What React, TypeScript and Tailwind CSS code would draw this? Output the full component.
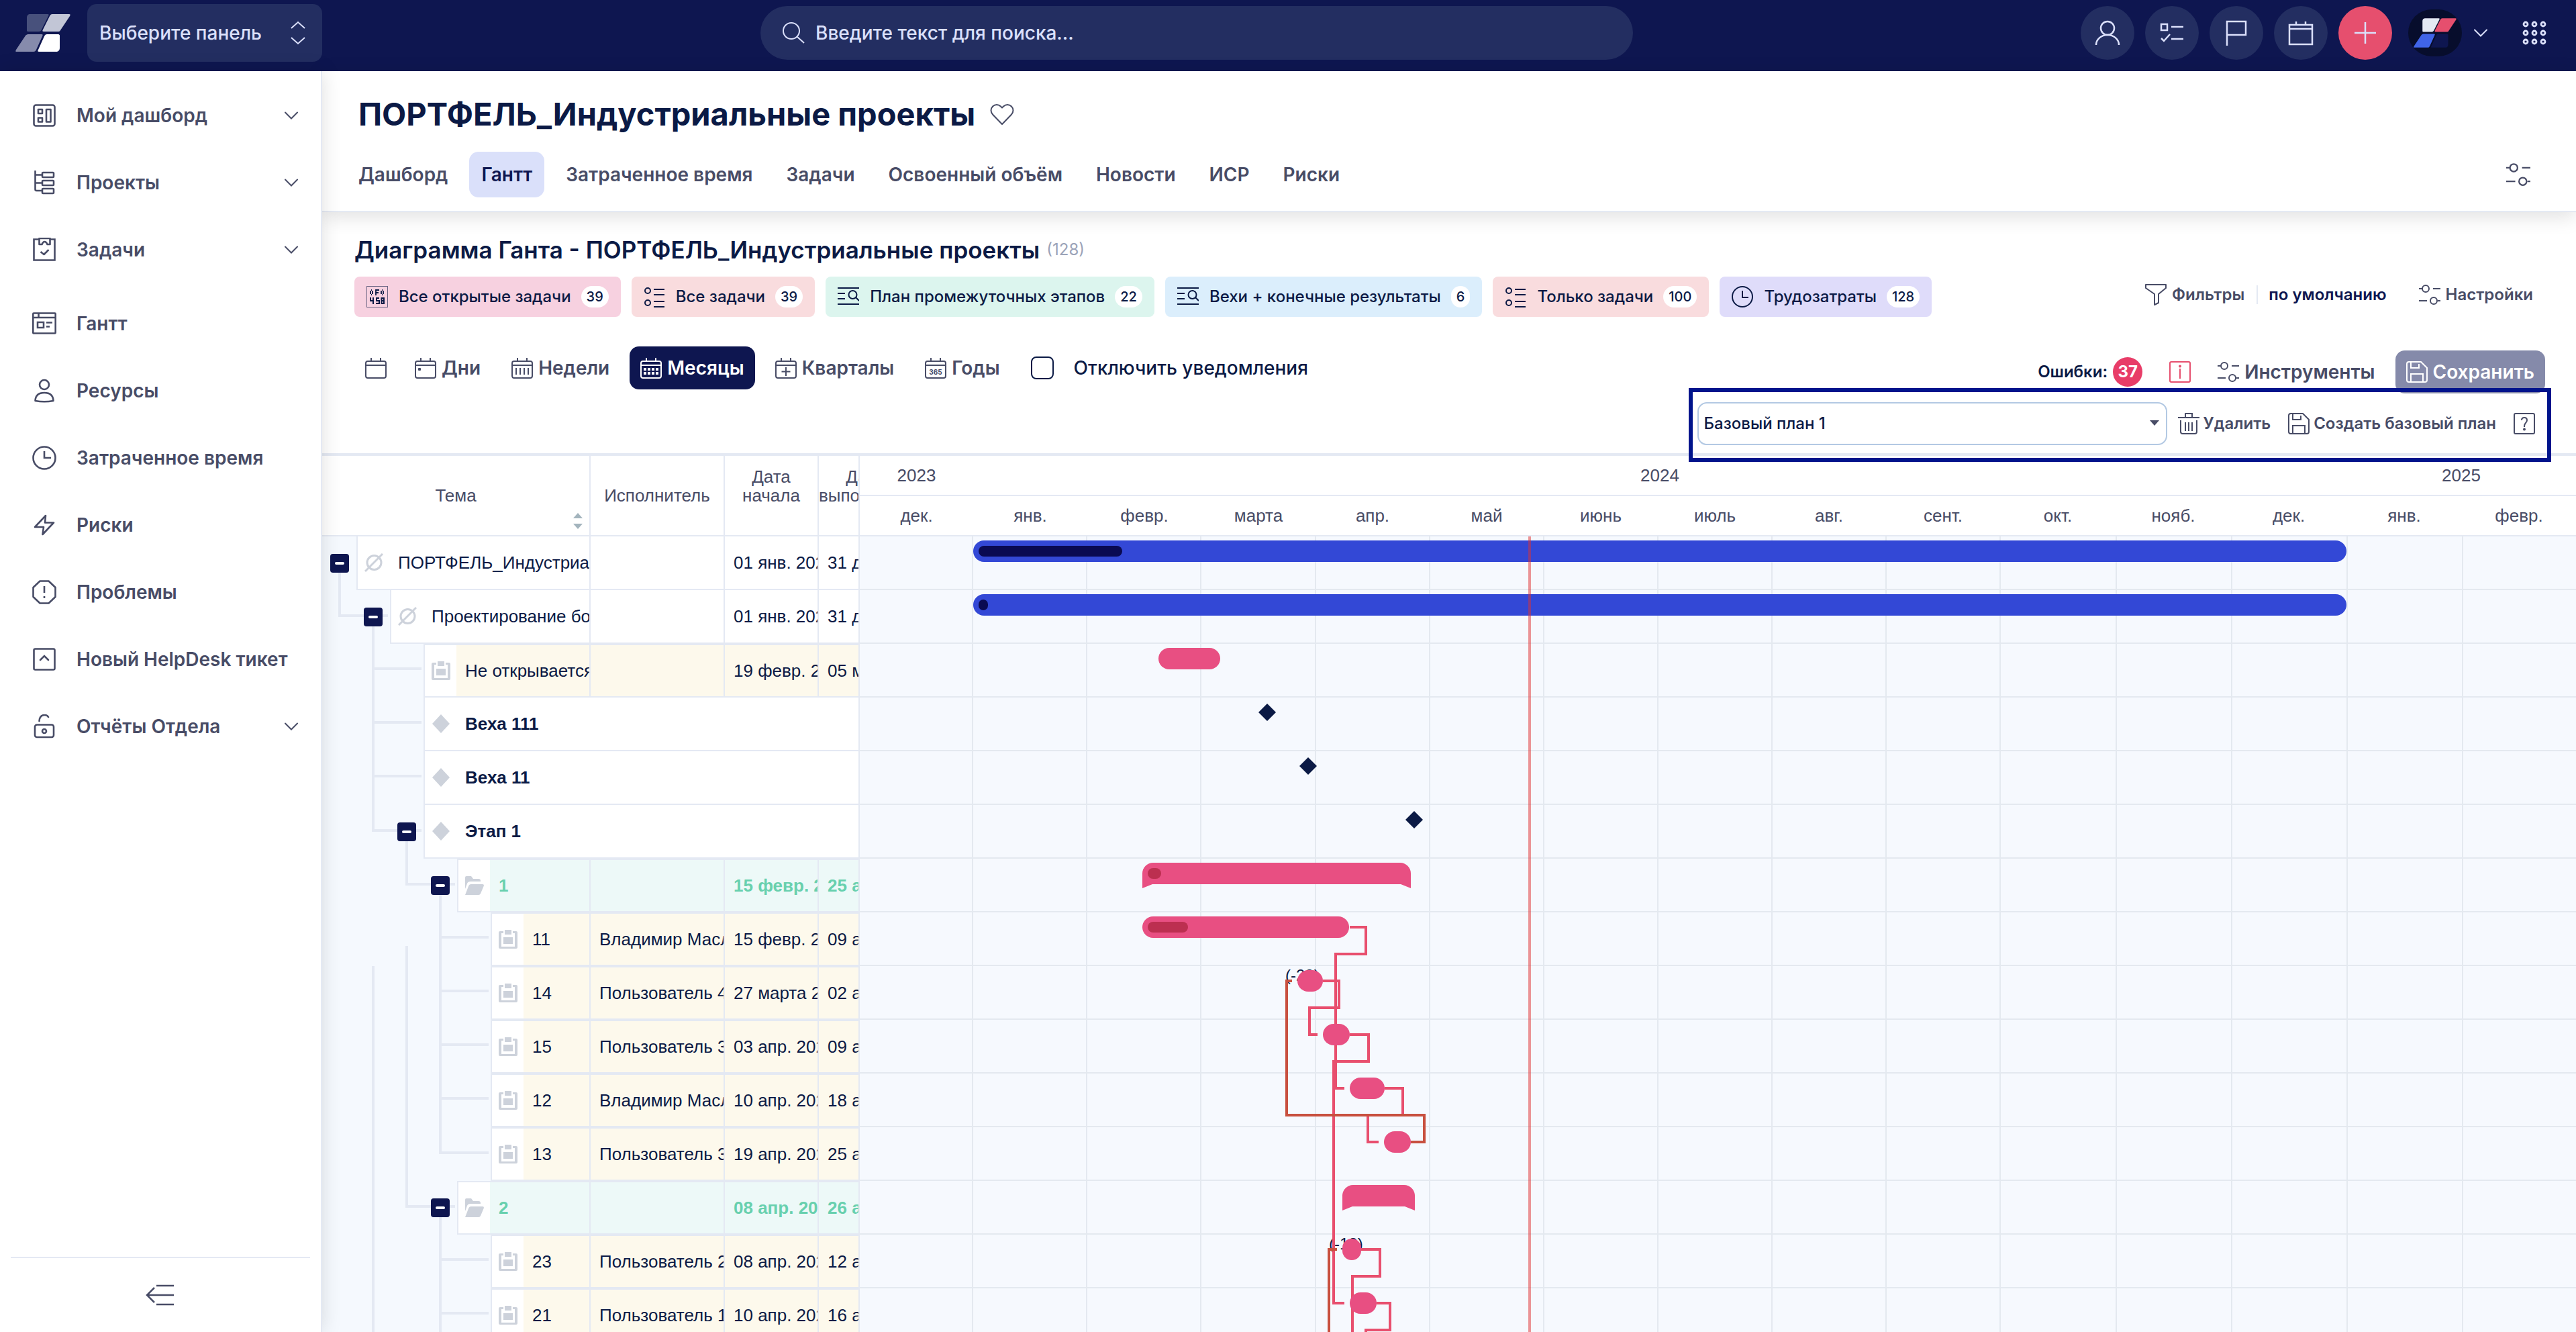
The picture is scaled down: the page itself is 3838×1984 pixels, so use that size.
import React from "react";

type IconProps = { className?: string; box?: number; width?: number; children: React.ReactNode };

function Icon({ className = "size-8", box = 32, width = 2, children }: IconProps) {
  return (
    <svg
      aria-hidden="true"
      viewBox={`0 0 ${box} ${box}`}
      className={`shrink-0 ${className}`}
      fill="none"
      stroke="currentColor"
      strokeWidth={width}
    >
      {children}
    </svg>
  );
}

/* ---------- icons ---------- */

const Chevron = ({ className = "w-5 h-3" }: { className?: string }) => (
  <svg aria-hidden="true" viewBox="0 0 20 12" className={`shrink-0 ${className}`} fill="none" stroke="currentColor" strokeWidth={2} strokeLinecap="round">
    <path d="M1 1.5 10 10.5 19 1.5" />
  </svg>
);

const Sliders = ({ className = "size-8" }: { className?: string }) => (
  <Icon className={className}>
    <path d="M0 7h5M21 7h11M0 25h12M28 25h4" />
    <circle cx="10" cy="7" r="5" />
    <circle cx="22" cy="25" r="5" />
  </Icon>
);

const Floppy = () => (
  <Icon>
    <path d="M4 1h18l9 9v18a3 3 0 0 1-3 3H4a3 3 0 0 1-3-3V4a3 3 0 0 1 3-3Z" />
    <path d="M7 1v9h12V4M7 31V19h18v12" />
  </Icon>
);

const Trash = () => (
  <Icon>
    <path d="M0 7h32M11 7V1h10v6M4 11v17a3 3 0 0 0 3 3h18a3 3 0 0 0 3-3V11M11 14v13M16 14v13M21 14v13" />
  </Icon>
);

const TaskLines = () => (
  <Icon>
    <circle cx="6" cy="7" r="4" />
    <circle cx="6" cy="25" r="4" />
    <path d="M15 5h16M15 13h16M15 23h16M15 31h16" />
  </Icon>
);

const LinesSearch = () => (
  <Icon>
    <path d="M0 3h32M0 11h11M0 19h11M0 27h32M27 17l5 5" />
    <circle cx="22.500" cy="13" r="6" />
  </Icon>
);

const Clock = () => (
  <Icon>
    <circle cx="16" cy="16" r="15" />
    <path d="M16 7v10h9" />
  </Icon>
);

const HexDigits = () => (
  <Icon>
    <rect x="0.500" y="0.500" width="31" height="31" strokeWidth={1} opacity={0.6} />
    <path d="M6 7v5M9 7v5M7 6h1M7 13h1M14 5v9M14 6h5M14 10h4M22 7v5M25 7v5M23 6h1M23 13h1" strokeWidth={1.8} />
    <path d="M6 17v5h4M10 17v10M19 18h-4v4h4v4h-5M22.500 18h3.500v8h-3.500zM22.500 22h3.500" />
  </Icon>
);

type CalKind = "plain" | "day" | "week" | "month" | "quarter" | "year";

const Calendar = ({ kind }: { kind: CalKind }) => (
  <Icon>
    <rect x="1" y="6" width="30" height="25" rx="3" />
    <path d="M1 12h30M9 1v5M23 1v5" />
    {kind === "day" && <rect x="5" y="16" width="4" height="4" rx="1" fill="currentColor" stroke="none" />}
    {kind === "week" && <path d="M7 16v10M13 16v10M19 16v10M25 16v10" />}
    {kind === "month" && (
      <path strokeWidth={4} strokeDasharray="4 2" d="M5 18h22M5 24h22" />
    )}
    {kind === "quarter" && <path d="M16 15v13M9.500 21.500h13" />}
    {kind === "year" && (
      <text x="16" y="25.500" textAnchor="middle" fontSize="10" fontWeight="700" fill="currentColor" stroke="none" className="font-['Inter',sans-serif]">
        365
      </text>
    )}
  </Icon>
);

const Logo = ({ className, fills }: { className: string; fills: string[] }) => (
  <svg aria-hidden="true" viewBox="0 0 82 56" className={className}>
    <path fill={fills[0]} d="M22 0h26c2 0 2 1 1 3L39 23c-1 2-2 3-4 3H19c-2 0-2-1-2-2V5c0-3 2-5 5-5Z" />
    <path fill={fills[1]} d="M55 0h25c2 0 2 1 1 3L67 24c-1 2-2 2-4 2H42c-2 0-2-1-1-3L51 3c1-2 2-3 4-3Z" />
    <path fill={fills[2]} d="M19 30h20c2 0 2 1 1 3L31 53c-1 2-2 3-4 3H1c-1 0-1-1 0-3l14-21c1-1 2-2 4-2Z" />
    <path fill={fills[3]} d="M47 30h17c1 0 2 1 2 2v18c0 4-2 6-6 6H35c-2 0-2-1-1-3l9-20c1-2 2-3 4-3Z" />
  </svg>
);

const side = { className: "size-9", box: 36, width: 2.6 };

const navItems: { label: string; icon: React.ReactNode; more?: boolean; gap?: boolean }[] = [
  {
    label: "Мой дашборд",
    more: true,
    icon: (
      <Icon {...side}>
        <rect x="2.500" y="2.500" width="31" height="31" rx="3" />
        <path d="M9 9h6v6H9zM9 21.500h6v6H9zM21 9h6.500v18.500H21z" strokeLinejoin="round" />
      </Icon>
    ),
  },
  {
    label: "Проекты",
    more: true,
    icon: (
      <Icon {...side}>
        <path d="M4.500 0v28q0 2 2 2H15M4.500 6.500H15M4.500 18.500H15" />
        <rect x="15" y="3" width="17" height="7" rx="1" />
        <rect x="15" y="15" width="17" height="7" rx="1" />
        <rect x="15" y="27" width="17" height="7" rx="1" />
      </Icon>
    ),
  },
  {
    label: "Задачи",
    more: true,
    icon: (
      <Icon {...side}>
        <path d="M11 2.500H2.500v31h31v-31H26" />
        <path d="M10.500 1h16v9h-4q-1.500-4-4-4t-4 4h-4zM12.500 21l5 4 7-7" strokeLinejoin="round" />
      </Icon>
    ),
  },
  {
    label: "Гантт",
    gap: true,
    icon: (
      <Icon {...side}>
        <rect x="1.300" y="2.500" width="33.400" height="30" rx="1" />
        <path d="M1 9h34M9.500 3v6M8 16h9v8H8zM21 16.500h9M21 22.500h5" />
      </Icon>
    ),
  },
  {
    label: "Ресурсы",
    icon: (
      <Icon {...side}>
        <circle cx="18" cy="9" r="7" />
        <path d="M4.500 33Q5 21 18 21t13.500 12Q18 35.500 4.500 33Z" strokeLinejoin="round" />
      </Icon>
    ),
  },
  {
    label: "Затраченное время",
    icon: (
      <Icon {...side}>
        <circle cx="18" cy="18" r="16.500" />
        <path d="M18 8v10h10" />
      </Icon>
    ),
  },
  {
    label: "Риски",
    icon: (
      <Icon {...side}>
        <path d="M20 4 4 21h13l-1.500 11L32 14.500H19Z" strokeLinejoin="round" />
      </Icon>
    ),
  },
  {
    label: "Проблемы",
    icon: (
      <Icon {...side}>
        <path d="M11.500 1.500h13l10 9.500v14l-10 9.500h-13l-10-9.500V11Z" strokeLinejoin="round" />
        <path d="M18 9v10M18 24v3" />
      </Icon>
    ),
  },
  {
    label: "Новый HelpDesk тикет",
    icon: (
      <Icon {...side}>
        <rect x="2.500" y="2.500" width="31" height="31" rx="2" />
        <path d="m12 19 6-6 6 6" strokeLinecap="round" />
      </Icon>
    ),
  },
  {
    label: "Отчёты Отдела",
    more: true,
    icon: (
      <Icon {...side}>
        <rect x="4" y="15.500" width="28" height="18.500" rx="3" />
        <circle cx="18" cy="25" r="3" />
        <path d="M10.500 10q.5-9 8-9 4 0 5.500 3" strokeLinecap="round" />
      </Icon>
    ),
  },
];

const tabs = ["Дашборд", "Гантт", "Затраченное время", "Задачи", "Освоенный объём", "Новости", "ИСР", "Риски"];

const chips = [
  { label: "Все открытые задачи", count: 39, color: "bg-[#f7d1e0]", icon: <HexDigits /> },
  { label: "Все задачи", count: 39, color: "bg-[#f9dcde]", icon: <TaskLines /> },
  { label: "План промежуточных этапов", count: 22, color: "bg-[#dcf5ee]", icon: <LinesSearch /> },
  { label: "Вехи + конечные результаты", count: 6, color: "bg-[#dbeefc]", icon: <LinesSearch /> },
  { label: "Только задачи", count: 100, color: "bg-[#f9dcde]", icon: <TaskLines /> },
  { label: "Трудозатраты", count: 128, color: "bg-[#dfdcfa]", icon: <Clock /> },
];

const periods: { label: string; kind: CalKind; active?: boolean }[] = [
  { label: "Дни", kind: "day" },
  { label: "Недели", kind: "week" },
  { label: "Месяцы", kind: "month", active: true },
  { label: "Кварталы", kind: "quarter" },
  { label: "Годы", kind: "year" },
];

/* ---------- gantt data ---------- */

type Kind = "project" | "task" | "milestone" | "folder";
type Row = { kind: Kind; level: number; title: string; who?: string; from?: string; to?: string };

const rows: Row[] = [
  { kind: "project", level: 0, title: "ПОРТФЕЛЬ_Индустриальные проекты", from: "01 янв. 2024", to: "31 дек. 2024" },
  { kind: "project", level: 1, title: "Проектирование больницы", from: "01 янв. 2024", to: "31 дек. 2024" },
  { kind: "task", level: 2, title: "Не открывается", from: "19 февр. 2024", to: "05 марта 2024" },
  { kind: "milestone", level: 2, title: "Веха 111" },
  { kind: "milestone", level: 2, title: "Веха 11" },
  { kind: "milestone", level: 2, title: "Этап 1" },
  { kind: "folder", level: 3, title: "1", from: "15 февр. 2024", to: "25 апр. 2024" },
  { kind: "task", level: 4, title: "11", who: "Владимир Маслов", from: "15 февр. 2024", to: "09 апр. 2024" },
  { kind: "task", level: 4, title: "14", who: "Пользователь 4", from: "27 марта 2024", to: "02 апр. 2024" },
  { kind: "task", level: 4, title: "15", who: "Пользователь 3", from: "03 апр. 2024", to: "09 апр. 2024" },
  { kind: "task", level: 4, title: "12", who: "Владимир Маслов", from: "10 апр. 2024", to: "18 апр. 2024" },
  { kind: "task", level: 4, title: "13", who: "Пользователь 3", from: "19 апр. 2024", to: "25 апр. 2024" },
  { kind: "folder", level: 3, title: "2", from: "08 апр. 2024", to: "26 апр. 2024" },
  { kind: "task", level: 4, title: "23", who: "Пользователь 2", from: "08 апр. 2024", to: "12 апр. 2024" },
  { kind: "task", level: 4, title: "21", who: "Пользователь 1", from: "10 апр. 2024", to: "16 апр. 2024" },
];

const indents = ["w-[51px]", "w-[101px]", "w-[151px]", "w-[201px]", "w-[251px]"];

const kindTone: Record<Kind, string> = {
  project: "bg-white",
  milestone: "bg-white font-bold",
  task: "bg-[#fdf9ec]",
  folder: "bg-[#edf9f8] font-bold text-[#68d0ae]",
};

const kindTop: Record<Kind, string> = {
  project: "",
  milestone: "",
  task: "border-t-2",
  folder: "border-t-2",
};

function KindIcon({ kind }: { kind: Kind }) {
  return (
    <svg aria-hidden="true" viewBox="0 0 28 28" className="size-7 text-[#cdd2db]" fill="currentColor">
      {kind === "project" && (
        <g fill="none" stroke="currentColor" strokeWidth={3}>
          <circle cx="14.500" cy="14" r="10.500" />
          <path d="M1 27 27 1" />
        </g>
      )}
      {kind === "task" && (
        <path fillRule="evenodd" d="M2 2h5v3H4v20h20V5h-3V2h5q2 0 2 2v22q0 2-2 2H2q-2 0-2-2V4q0-2 2-2ZM9 0h10v7H9zM7 11h14v10H7z" />
      )}
      {kind === "milestone" && <path d="M14 0 27 14 14 28 1 14Z" />}
      {kind === "folder" && (
        <path d="M2 0h7l3 4h8q3 0 3 3v1H8q-4 0-5 3L0 19V2q0-2 2-2ZM9 12h17q2 0 2 2l-5 12q-1 2-3 2H0l5-13q1-3 4-3Z" />
      )}
    </svg>
  );
}

function TitleCell({ row, toggle }: { row: Row; toggle: boolean }) {
  return (
    <div className="flex h-20">
      <div className={`flex shrink-0 items-center justify-end pr-[11px] ${indents[row.level]}`}>
        {toggle && (
          <button aria-label={`Свернуть ${row.title}`} className="relative flex size-7 items-center justify-center rounded-[4px] bg-[#0e1650]">
            <span className="h-1 w-3.5 rounded-xs bg-white" />
          </button>
        )}
      </div>
      <div className={`flex min-w-0 flex-1 border-b-2 border-l-2 border-[#e4e9f3] ${kindTop[row.kind]}`}>
        <div className="flex w-[47px] shrink-0 items-center justify-center bg-white">
          <KindIcon kind={row.kind} />
        </div>
        <div className={`flex min-w-0 flex-1 items-center overflow-hidden pl-[13px] whitespace-nowrap ${kindTone[row.kind]}`}>
          {row.title}
        </div>
      </div>
    </div>
  );
}

function TaskTable() {
  const head = "border-r-2 border-b-2 border-[#e4e9f3] bg-white p-0 align-middle font-normal";
  const cell = "overflow-hidden border-r-2 border-b-2 border-[#e4e9f3] py-0 pr-0 pl-[13px] whitespace-nowrap";
  return (
    <div className="relative w-[801px] shrink-0 overflow-hidden border-r-2 border-[#e4e9f3] bg-[#f5f9fe]">
      <svg aria-hidden="true" width="800" height="1320" className="absolute top-0 left-0" fill="none" stroke="#e4e9f3" strokeWidth={4}>
        <path d="M26 172v66h72M76 252v306h72M76 317h72M76 397h72M76 477h72M126 572v66h72" />
        <path d="M176 652v386h72M176 717h72M176 797h72M176 877h72M176 957h72" />
        <path d="M126 730v388h72M76 760v560M176 1132v188M176 1197h72M176 1277h72" />
      </svg>
      <table className="relative w-[880px] table-fixed border-separate border-spacing-0 text-left font-['Liberation_Sans',sans-serif] text-[26px] leading-7 text-[#0b1a45]">
        <colgroup>
          <col className="w-[400px]" />
          <col className="w-[200px]" />
          <col className="w-[140px]" />
          <col className="w-[140px]" />
        </colgroup>
        <thead>
          <tr className="h-[120px] text-center text-[#484c66]">
            <th className={head}>
              <div className="relative">
                Тема
                <svg aria-hidden="true" viewBox="0 0 14 24" className="absolute -bottom-9 right-2.5 h-6 w-3.5" fill="#a3b4bd">
                  <path d="M7 0 14 8H0ZM0 16h14l-7 8Z" />
                </svg>
              </div>
            </th>
            <th className={head}>Исполнитель</th>
            <th className={`${head} pb-7`}>Дата<br />начала</th>
            <th className={`${head} pb-7`}>Дата<br />выполнения</th>
          </tr>
        </thead>
        <tbody>
          {rows.map((row, i) => {
            const toggle = i + 1 < rows.length && rows[i + 1].level > row.level;
            if (row.kind === "milestone") {
              return (
                <tr key={i} className="h-20">
                  <td colSpan={4} className="p-0">
                    <TitleCell row={row} toggle={toggle || row.title === "Этап 1"} />
                  </td>
                </tr>
              );
            }
            const tone = `${cell} ${kindTop[row.kind]} ${kindTone[row.kind]}`;
            return (
              <tr key={i} className="h-20">
                <td className="border-r-2 border-[#e4e9f3] p-0">
                  <TitleCell row={row} toggle={toggle} />
                </td>
                <td className={tone}>{row.who}</td>
                <td className={tone}>{row.from}</td>
                <td className={tone}>{row.to}</td>
              </tr>
            );
          })}
        </tbody>
      </table>
    </div>
  );
}

const months = [
  { name: "дек.", w: 169 },
  { name: "янв.", w: 170 },
  { name: "февр.", w: 170 },
  { name: "марта", w: 170 },
  { name: "апр.", w: 170 },
  { name: "май", w: 170 },
  { name: "июнь", w: 170 },
  { name: "июль", w: 170 },
  { name: "авг.", w: 170 },
  { name: "сент.", w: 170 },
  { name: "окт.", w: 172 },
  { name: "нояб.", w: 172 },
  { name: "дек.", w: 172 },
  { name: "янв.", w: 172 },
  { name: "февр.", w: 170 },
];

const years = [
  { name: "2023", w: 169 },
  { name: "2024", w: 2046 },
  { name: "2025", w: 342 },
];

type Bar = { row: number; x: number; w: number; done?: number; kind?: "project" | "folder" };

const bars: Bar[] = [
  { row: 0, x: 169, w: 2046, done: 214, kind: "project" },
  { row: 1, x: 169, w: 2046, done: 14, kind: "project" },
  { row: 2, x: 445, w: 92 },
  { row: 6, x: 421, w: 400, done: 20, kind: "folder" },
  { row: 7, x: 421, w: 308, done: 60 },
  { row: 8, x: 652, w: 38 },
  { row: 9, x: 690, w: 40 },
  { row: 10, x: 730, w: 52 },
  { row: 11, x: 781, w: 40 },
  { row: 12, x: 719, w: 108, kind: "folder" },
  { row: 13, x: 719, w: 28 },
  { row: 14, x: 730, w: 40 },
];

const milestones = [
  { row: 3, x: 607 },
  { row: 4, x: 668 },
  { row: 5, x: 826 },
];

function Timeline() {
  return (
    <div className="flex min-w-0 flex-1 flex-col overflow-hidden bg-[#f6f9fe] font-['Liberation_Sans',sans-serif] text-[26px] text-[#484c66]">
      <div className="flex h-[60px] shrink-0 border-b-2 border-[#e4e9f3] bg-white">
        {years.map((y) => (
          <div key={y.name} className="flex items-center justify-center" style={{ flex: `${y.w} 1 0` }}>
            {y.name}
          </div>
        ))}
      </div>
      <div className="flex h-[60px] shrink-0 border-b-2 border-[#e4e9f3] bg-white">
        {months.map((m, i) => (
          <div key={i} className="flex items-center justify-center" style={{ flex: `${m.w} 1 0` }}>
            {m.name}
          </div>
        ))}
      </div>
      <div className="relative flex-1">
        <div className="absolute inset-0 flex">
          {months.map((m, i) => (
            <div key={i} className="border-r-2 border-[#e4e9f0] last:border-r-0" style={{ flex: `${m.w} 1 0` }} />
          ))}
        </div>
        <div className="relative">
          {rows.map((_, i) => (
            <div key={i} className="h-20 border-b-2 border-[#e4e9f0]" />
          ))}
        </div>
        <svg aria-hidden="true" width="2557" height="1200" className="absolute top-0 left-0">
          <g className="font-['Liberation_Sans',sans-serif] text-[24px]" fill="#0b1a45">
            <text x="634" y="662">(-28)</text>
            <text x="699" y="1062">(-18)</text>
          </g>
          <g fill="none" strokeWidth={4} stroke="#e84f6e">
            <path d="M730 582h24v40h-45v200h13" />
            <path d="M690 662h24v40h-44v40h12" />
            <path d="M730 742h28v40h-52v360h16" />
            <path d="M782 822h27v40h-52v40h16" />
            <path d="M747 1062h28v40h-41v98" />
            <path d="M770 1142h20v40h-36v18" />
          </g>
          <g fill="none" strokeWidth={4} stroke="#c8503f">
            <path d="M821 902h20v-40H636V662h8" />
            <path d="M699 1200v-138h12" />
          </g>
          {bars.map((b) => {
            const y = b.row * 80 + 6;
            const blue = b.kind === "project";
            const end = b.x + b.w;
            return (
              <g key={b.row}>
                {b.kind === "folder" ? (
                  <path
                    fill="#e84f82"
                    d={`M${b.x} ${y + 38}V${y + 16}a16 16 0 0 1 16-16H${end - 16}a16 16 0 0 1 16 16V${y + 38}l-15-6H${b.x + 15}Z`}
                  />
                ) : (
                  <rect x={b.x} y={y} width={b.w} height={32} rx={Math.min(16, b.w / 2)} fill={blue ? "#3348d6" : "#e84f82"} />
                )}
                {b.done && (
                  <rect x={b.x + 8} y={y + 8} width={b.done} height={16} rx={Math.min(8, b.done / 2)} fill={blue ? "#0a0a52" : "#bc2f50"} />
                )}
              </g>
            );
          })}
          {milestones.map((m) => (
            <path key={m.row} fill="#0b1a45" d={`M${m.x} ${m.row * 80 + 9}l13 13-13 13-13-13Z`} />
          ))}
          <path d="M998 0v1200" stroke="#e03030" strokeOpacity={0.5} strokeWidth={4} />
        </svg>
      </div>
    </div>
  );
}

/* ---------- page parts ---------- */

function RoundButton({ label, children }: { label: string; children: React.ReactNode }) {
  return (
    <button aria-label={label} className="flex size-20 items-center justify-center rounded-full bg-[#232e61] text-[#dbe0fb]">
      {children}
    </button>
  );
}

function TopBar() {
  return (
    <header className="flex h-[106px] shrink-0 bg-[#0e1650] pr-11 pb-2 text-[28px] text-[#dbe0fb]">
      <div className="flex w-[480px] shrink-0 items-center">
        <a href="#home" aria-label="Главная" className="mr-[25px] ml-[23px]">
          <Logo className="h-14 w-[82px]" fills={["#48517c", "#c2c6d6", "#868bac", "#ffffff"]} />
        </a>
        <div className="relative flex-1">
          <select aria-label="Панель" className="h-[86px] w-full appearance-none rounded-[14px] bg-[#232e61] pl-[18px] font-medium">
            <option>Выберите панель</option>
          </select>
          <svg aria-hidden="true" viewBox="0 0 22 36" className="pointer-events-none absolute top-[25px] right-[25px] h-9 w-[22px]" fill="none" stroke="currentColor" strokeWidth={2}>
            <path d="m1 11 10-9 10 9M1 25l10 9 10-9" />
          </svg>
        </div>
      </div>
      <div className="flex flex-1 items-center justify-between">
        <label className="ml-[653px] flex h-20 w-[1300px] items-center gap-4 rounded-full bg-[#232e61] pl-8">
          <Icon className="size-[34px]" box={34}>
            <circle cx="14" cy="14" r="12" />
            <path d="m23 23 10 9" />
          </Icon>
          <input type="search" aria-label="Поиск" placeholder="Введите текст для поиска..." className="flex-1 bg-transparent font-medium outline-none placeholder:text-[#dbe0fb]" />
        </label>
        <div className="flex items-center gap-4">
          <RoundButton label="Профиль">
            <Icon className="size-10" box={40} width={2.5}>
              <circle cx="20" cy="13" r="10" />
              <path d="M3 38a17 15 0 0 1 34 0" />
            </Icon>
          </RoundButton>
          <RoundButton label="Задачи">
            <Icon className="size-10" box={40} width={2.5}>
              <path d="M4 7h9v9H4zM19 11h18M19 29h18M4 28l4 4 9-10" />
            </Icon>
          </RoundButton>
          <RoundButton label="Флаг">
            <Icon className="size-10" box={40} width={2.5}>
              <path d="M6 39V3h28v20H6" />
            </Icon>
          </RoundButton>
          <RoundButton label="Календарь">
            <Icon className="size-10" box={40} width={2.5}>
              <path d="M3 8h34v29H3zM3 14h34M13 3v5M27 3v5" />
            </Icon>
          </RoundButton>
          <button aria-label="Создать" className="flex size-20 items-center justify-center rounded-full bg-[#e64f6e]">
            <Icon className="size-8" width={2.5}>
              <path d="M16 0v32M0 16h32" />
            </Icon>
          </button>
          <button aria-label="Аккаунт" className="ml-2 flex items-center gap-[18px]">
            <span className="flex h-[70px] w-20 items-center justify-center overflow-hidden rounded-full bg-[#070d2c]">
              <Logo className="h-11 w-16" fills={["#e3e8f3", "#e64f6e", "#4064e8", "#0e1650"]} />
            </span>
            <Chevron />
          </button>
          <button aria-label="Приложения" className="ml-9">
            <Icon className="size-9" box={36} width={2.8}>
              {[5, 18, 31].map((cy) => [5, 18, 31].map((cx) => <circle key={`${cx}-${cy}`} cx={cx} cy={cy} r="3" />))}
            </Icon>
          </button>
        </div>
      </div>
    </header>
  );
}

function Sidebar() {
  return (
    <aside className="relative z-10 flex w-[480px] shrink-0 flex-col border-r-2 border-[#e4e9f3] bg-white pt-4 shadow-[0_0_28px_rgba(0,0,0,0.13)]">
      <nav className="flex flex-col text-[28px] font-semibold text-[#484c66]">
        {navItems.map((n) => (
          <a key={n.label} href="#nav" className={`flex h-[100px] items-center pr-[34px] pl-12 ${n.gap ? "mt-2.5" : ""}`}>
            {n.icon}
            <span className="ml-[30px] flex-1">{n.label}</span>
            {n.more && <Chevron />}
          </a>
        ))}
      </nav>
      <div className="mx-4 mt-auto flex h-[112px] items-center justify-center border-t-2 border-[#e4e9f3] text-[#484c66]">
        <button aria-label="Свернуть меню">
          <Icon className="size-11" box={44} width={2.5}>
            <path d="M16 8h26M2 22h40M16 36h26M13 11 2 22l11 11" />
          </Icon>
        </button>
      </div>
    </aside>
  );
}

function PageHead() {
  return (
    <div className="relative border-b-2 border-[#e4e9f3] bg-white px-[54px] pt-8 pb-5 shadow-[0_6px_28px_rgba(0,0,0,0.13)]">
      <div className="flex h-16 items-center gap-[22px] text-[#0b1a45]">
        <h1 className="text-[47px] leading-[64px] font-bold">ПОРТФЕЛЬ_Индустриальные проекты</h1>
        <button aria-label="В избранное" className="text-[#484c66]">
          <Icon className="size-9" box={36} width={2}>
            <path d="M18 33 4 18.500a8.500 8.500 0 0 1 0-12 8.500 8.500 0 0 1 12 0l2 2 2-2a8.500 8.500 0 0 1 12 0 8.500 8.500 0 0 1 0 12Z" strokeLinejoin="round" />
          </Icon>
        </button>
      </div>
      <div className="mt-6 flex items-center">
        <nav className="-ml-[18px] flex gap-3.5 text-[28px] font-semibold text-[#484c66]">
          {tabs.map((t) => (
            <a
              key={t}
              href="#tab"
              className={`flex h-[68px] items-center rounded-[14px] px-[18px] ${t === "Гантт" ? "bg-[#dae0fa] text-[#0e1650]" : ""}`}
            >
              {t}
            </a>
          ))}
        </nav>
        <button aria-label="Настройки вкладок" className="mr-3.5 ml-auto text-[#484c66]">
          <Sliders className="size-9" />
        </button>
      </div>
    </div>
  );
}

function Toolbar() {
  return (
    <div className="pr-[46px] pb-3 pl-12 text-[#484c66]">
      <div className="flex items-center gap-2.5 pt-8">
        <h2 className="text-[35px] leading-[48px] font-semibold text-[#0b1a45]">
          Диаграмма Ганта - ПОРТФЕЛЬ_Индустриальные проекты
        </h2>
        <span className="text-[24px] text-[#9ba3b8]">(128)</span>
      </div>

      <div className="mt-4 flex items-start justify-between">
        <div className="flex gap-4 text-[#0b1a45]">
          {chips.map((c) => (
            <button key={c.label} className={`flex h-[60px] items-center rounded-lg px-[18px] text-[24px] font-medium ${c.color}`}>
              {c.icon}
              <span className="ml-4">{c.label}</span>
              <span className="ml-[15px] flex h-8 items-center rounded-full bg-white px-2 text-[20px]">{c.count}</span>
            </button>
          ))}
        </div>
        <div className="mr-[18px] flex h-[54px] items-center text-[24px] font-semibold">
          <button className="flex items-center gap-2">
            <Icon>
              <path d="M1 1h30v5L20 15v13l-6 3V15L1 6Z" strokeLinejoin="round" />
            </Icon>
            Фильтры
          </button>
          <span className="mr-4 ml-[18px] h-7 w-0.5 bg-[#e4e9f3]" />
          <a href="#default" className="text-[#0e1650]">по умолчанию</a>
          <button className="ml-12 flex items-center gap-2">
            <Sliders />
            Настройки
          </button>
        </div>
      </div>

      <div className="mt-[44px] flex items-start justify-between">
        <div className="flex h-16 items-center text-[28px] font-semibold">
          <button aria-label="Календарь" className="pr-[26px] pl-4">
            <Calendar kind="plain" />
          </button>
          <div className="flex gap-3.5">
            {periods.map((p) => (
              <button
                key={p.label}
                className={`flex h-16 items-center gap-2 rounded-[14px] px-4 ${p.active ? "bg-[#0e1650] text-white" : ""}`}
              >
                <Calendar kind={p.kind} />
                {p.label}
              </button>
            ))}
          </div>
          <label className="ml-[30px] flex items-center gap-[30px] font-medium text-[#0b1a45]">
            <input type="checkbox" className="size-[34px] appearance-none rounded-lg border-2 border-[#0b1a45] bg-white" />
            Отключить уведомления
          </label>
        </div>

        <div className="flex flex-col items-end pt-1.5">
          <div className="flex h-16 items-center">
            <span className="text-[24px] font-semibold text-[#0b1a45]">Ошибки:</span>
            <span className="ml-2 flex size-11 items-center justify-center rounded-full bg-[#e83d68] text-[24px] font-bold text-white">37</span>
            <button aria-label="Информация" className="ml-10 text-[#e64f6e]">
              <Icon>
                <rect x="1" y="1" width="30" height="30" rx="2" />
                <path d="M16 11v15" />
                <circle cx="16" cy="7.500" r="1" />
              </Icon>
            </button>
            <button className="ml-10 flex items-center gap-2 text-[28px] font-semibold">
              <Sliders />
              Инструменты
            </button>
            <button className="ml-[30px] flex h-16 items-center gap-2 rounded-[14px] bg-[#858aaa] px-4 text-[28px] font-semibold text-white">
              <Floppy />
              Сохранить
            </button>
          </div>

          <div className="relative mt-[13px] mr-[15px] flex h-16 items-center text-[24px] font-semibold">
            <div className="relative">
              <select aria-label="Базовый план" className="h-16 w-[700px] appearance-none rounded-[14px] border-2 border-[#b3c9e3] bg-white pl-2 font-medium text-[#0b1a45]">
                <option>Базовый план 1</option>
              </select>
              <svg aria-hidden="true" viewBox="0 0 14 8" className="pointer-events-none absolute top-[27px] right-3 h-2 w-3.5" fill="currentColor">
                <path d="M0 0h14L7 8Z" />
              </svg>
            </div>
            <button className="ml-4 flex items-center gap-1.5">
              <Trash />
              Удалить
            </button>
            <button className="ml-[26px] flex items-center gap-1.5">
              <Floppy />
              Создать базовый план
            </button>
            <button aria-label="Справка" className="ml-[26px]">
              <Icon>
                <rect x="1" y="1" width="30" height="30" rx="2" />
                <path d="M12 11q0-4 4-4t4 4q0 2-2 4t-2 5v1" />
                <circle cx="16" cy="24.500" r="1" />
              </Icon>
            </button>
            <div className="pointer-events-none absolute -top-[21px] -right-6 -bottom-[25px] -left-[13px] z-10 border-[6px] border-[#00148c]" />
          </div>
        </div>
      </div>
    </div>
  );
}

export default function App() {
  return (
    <div className="flex h-screen flex-col overflow-hidden bg-white font-['Inter',sans-serif] leading-[1.25]">
      <TopBar />
      <div className="flex min-h-0 flex-1">
        <Sidebar />
        <main className="flex min-w-0 flex-1 flex-col">
          <PageHead />
          <Toolbar />
          <div className="flex min-h-0 flex-1 overflow-hidden border-t-4 border-[#e4e9f3]">
            <TaskTable />
            <Timeline />
          </div>
        </main>
      </div>
    </div>
  );
}
